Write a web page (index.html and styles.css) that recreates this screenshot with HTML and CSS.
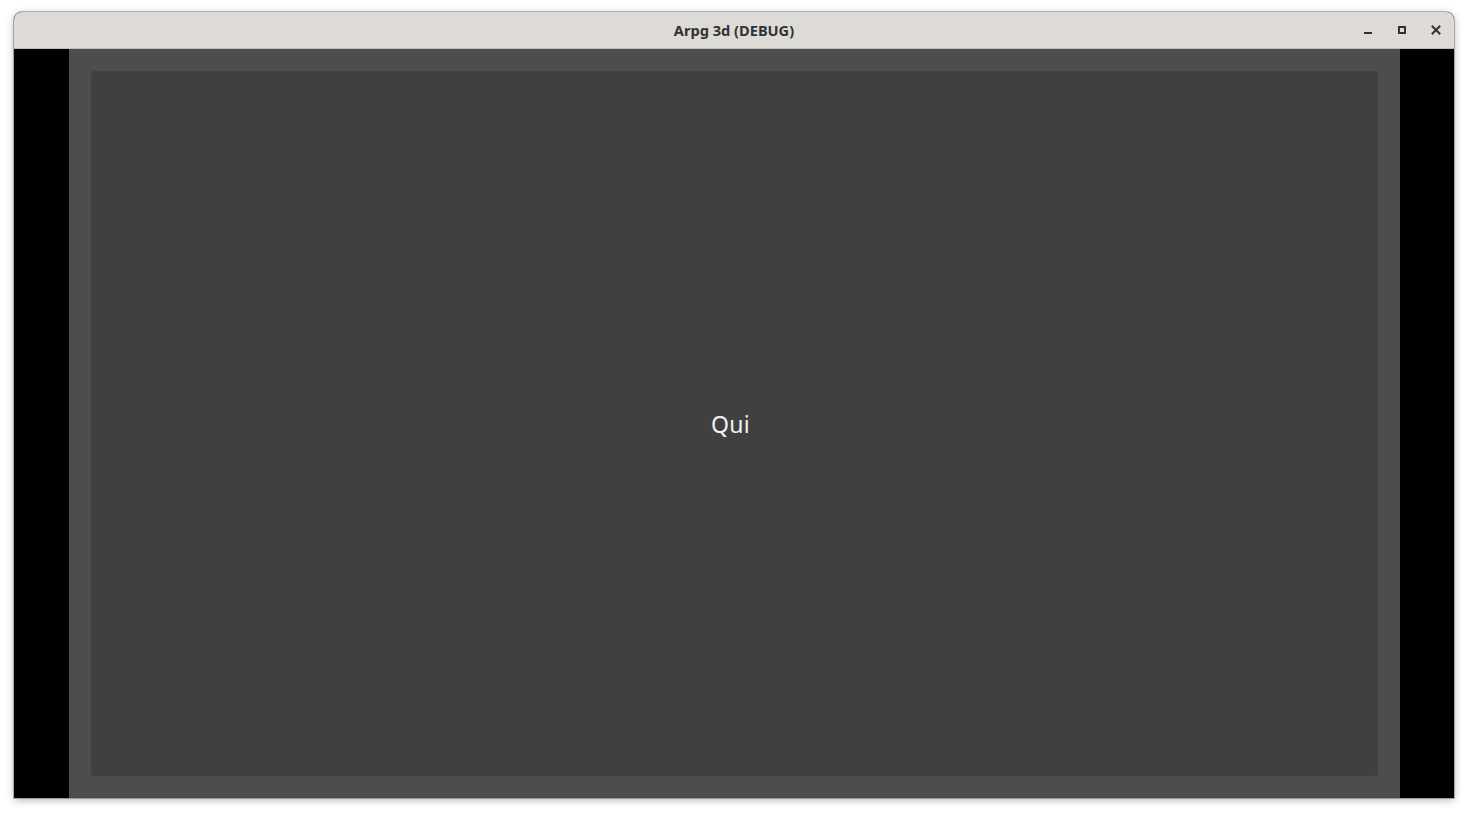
FILE: index.html
```html
<!DOCTYPE html>
<html>
<head>
<meta charset="utf-8">
<link rel="stylesheet" href="styles.css">
</head>
<body>
<div class="window">
  <div class="titlebar">
    <div class="title">Arpg 3d (DEBUG)</div>
    <div class="controls">
      <span class="btn">
        <svg width="16" height="16" viewBox="0 0 16 16"><rect x="4" y="10" width="8" height="2" fill="#2e3436"/></svg>
      </span>
      <span class="btn">
        <svg width="16" height="16" viewBox="0 0 16 16"><rect x="5" y="5" width="6" height="6" fill="none" stroke="#2e3436" stroke-width="2"/></svg>
      </span>
      <span class="btn">
        <svg width="16" height="16" viewBox="0 0 16 16"><path d="M4.5 4.5 L11.5 11.5 M11.5 4.5 L4.5 11.5" stroke="#2e3436" stroke-width="2" stroke-linecap="square"/></svg>
      </span>
    </div>
  </div>
  <div class="content">
    <div class="bar"></div>
    <div class="panel">
      <div class="inner">
        <span class="label">Qui</span>
      </div>
    </div>
    <div class="bar"></div>
  </div>
</div>
</body>
</html>
```
FILE: styles.css
```css
html, body {
  margin: 0;
  padding: 0;
  background: #ffffff;
}
body {
  width: 1468px;
  height: 815px;
  overflow: hidden;
}
.window {
  margin: 12px 0 0 14px;
  width: 1440px;
  height: 786px;
  display: flex;
  flex-direction: column;
  border-radius: 8px 8px 0 0;
  box-shadow: 0 0 0 1px rgba(0,0,0,0.25), 0 2px 8px rgba(0,0,0,0.3);
  overflow: hidden;
  background: #000;
}
.titlebar {
  height: 36px;
  flex: none;
  background: #dedbd7;
  border-bottom: 1px solid #c0bdb9;
  display: flex;
  align-items: center;
  justify-content: center;
  position: relative;
}
.title {
  font-family: "Noto Sans", "DejaVu Sans", sans-serif;
  font-weight: 700;
  font-size: 14.6px;
  color: #2e3436;
}
.controls {
  position: absolute;
  right: 10px;
  top: 10px;
  display: flex;
  gap: 18px;
}
.btn {
  width: 16px;
  height: 16px;
  display: block;
}
.btn svg { display: block; }
.content {
  flex: 1;
  display: flex;
}
.bar {
  width: 55px;
  flex: none;
  background: #000;
}
.bar:last-child { width: 54px; }
.panel {
  flex: 1;
  background: #4d4d4d;
  padding: 22px;
  display: flex;
}
.inner {
  flex: 1;
  background: #404040;
  border-radius: 3px;
  display: flex;
  align-items: center;
  justify-content: center;
}
.label {
  font-family: "Noto Sans", "Open Sans", sans-serif;
  font-size: 23px;
  letter-spacing: 0.3px;
  color: #f2f2f2;
  margin-left: -8px;
  margin-top: 1px;
}
```
